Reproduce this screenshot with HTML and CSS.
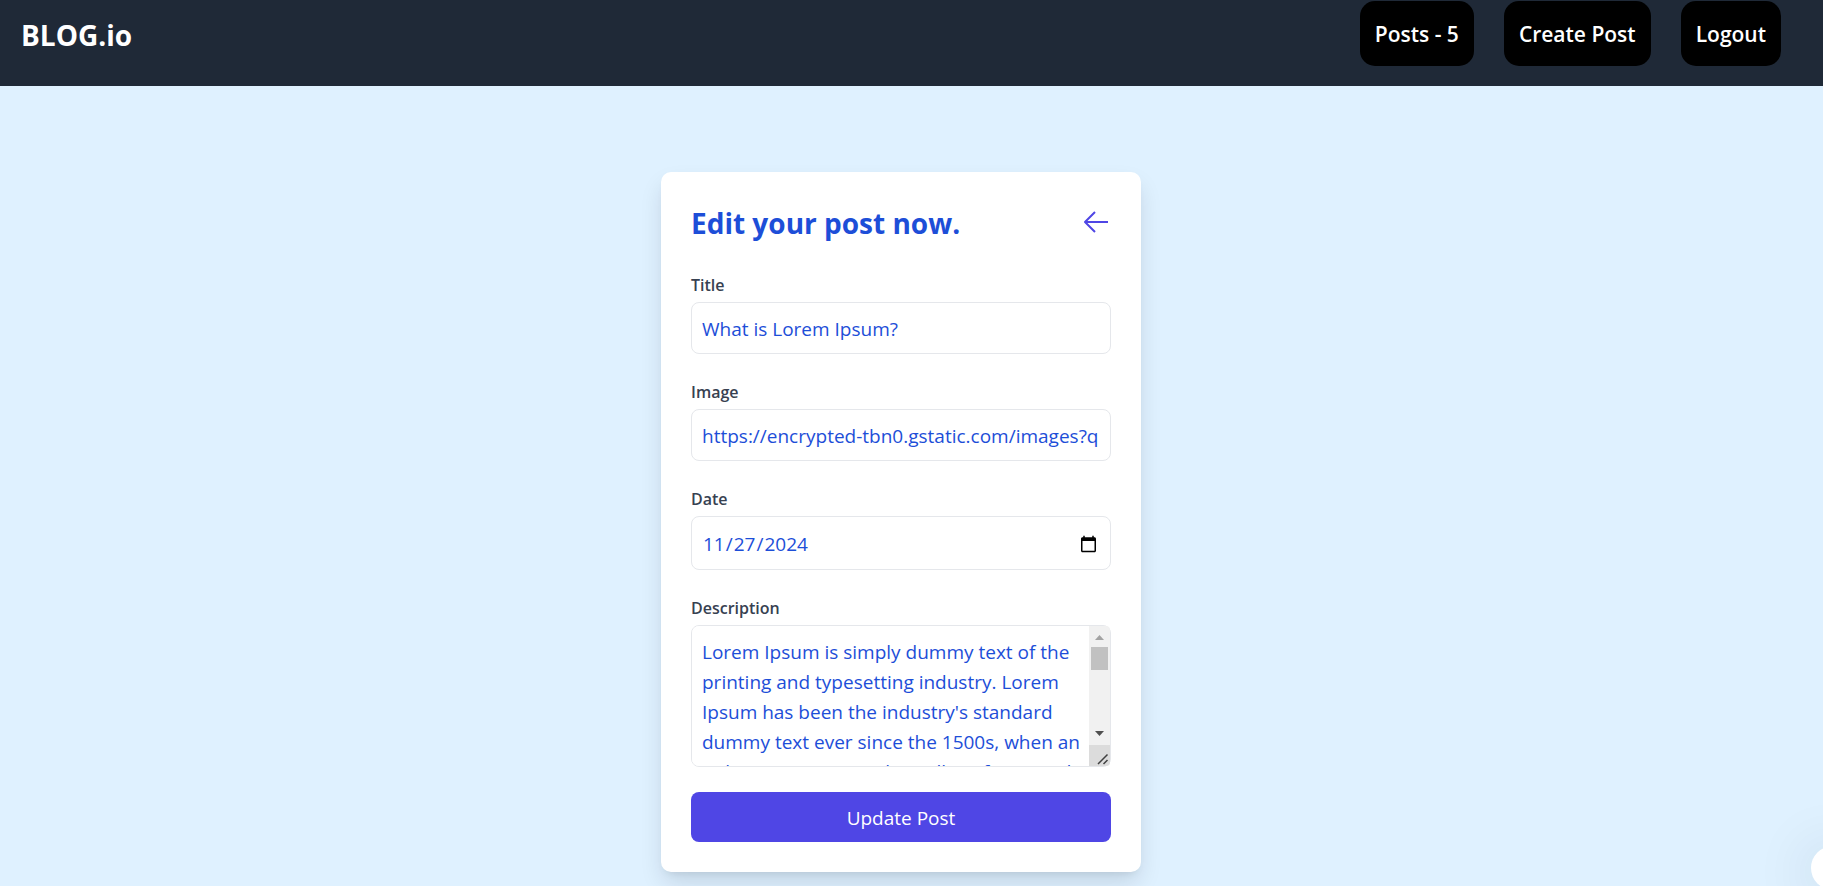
FILE: index.html
```html
<!DOCTYPE html>
<html lang="en-US">
<head>
<meta charset="utf-8">
<meta name="viewport" content="width=device-width, initial-scale=1">
<title>BLOG.io</title>
<link rel="stylesheet" href="styles.css">
</head>
<body>
<header class="navbar">
  <a class="brand" href="#">BLOG.io</a>
  <nav class="nav-links">
    <a class="nav-link" href="#">Posts - 5</a>
    <a class="nav-link" href="#">Create Post</a>
    <button class="nav-link" type="button">Logout</button>
  </nav>
</header>
<main class="page">
  <form class="card">
    <div class="card-head">
      <h1 class="card-title">Edit your post now.</h1>
      <a class="back" href="#" aria-label="Back">
        <svg class="back-icon" viewBox="0 0 30 30" fill="none" stroke="currentColor" stroke-width="2" stroke-linejoin="round"><path d="M27 14H4M14 4 4 14l10 10"/></svg>
      </a>
    </div>
    <div class="field">
      <label class="label" for="title">Title</label>
      <input class="input" id="title" type="text" value="What is Lorem Ipsum?">
    </div>
    <div class="field">
      <label class="label" for="image">Image</label>
      <input class="input" id="image" type="text" value="https://encrypted-tbn0.gstatic.com/images?q">
    </div>
    <div class="field">
      <label class="label" for="date">Date</label>
      <input class="input input-date" id="date" type="date" value="2024-11-27">
    </div>
    <div class="field">
      <label class="label" for="description">Description</label>
      <div class="textarea-wrap">
        <textarea class="input textarea" id="description">Lorem Ipsum is simply dummy text of the printing and typesetting industry. Lorem Ipsum has been the industry's standard dummy text ever since the 1500s, when an unknown printer took a galley of type and scrambled it to make a type specimen book. It has survived not only five centuries, but also the leap into electronic typesetting, remaining essentially unchanged. It was popularised in the 1960s with the release of Letraset sheets containing Lorem Ipsum passages, and more recently with desktop publishing software like Aldus PageMaker including versions of Lorem Ipsum.</textarea>
        <div class="scrollbar" aria-hidden="true">
          <svg class="scroll-arrow scroll-up" viewBox="0 0 21 21"><path d="M6 14 10.500 9 15 14z"/></svg>
          <div class="scroll-track"><div class="scroll-thumb"></div></div>
          <svg class="scroll-arrow scroll-down" viewBox="0 0 21 21"><path d="M6 7h9l-4.500 5z"/></svg>
          <svg class="scroll-corner" viewBox="0 0 21 21"><path d="m9 19 9.500-9.500M14.500 19l4-4"/></svg>
        </div>
      </div>
    </div>
    <button class="submit" type="submit">Update Post</button>
  </form>
</main>
<button class="float-button" type="button" aria-label="Open menu"></button>
</body>
</html>
```
FILE: styles.css
```css
* { box-sizing: border-box; }

body {
  margin: 0;
  min-height: 100vh;
  background: #dff1ff;
  font-family: "Open Sans", "Noto Sans", sans-serif;
  font-size: 19px;
}

.navbar {
  display: flex;
  align-items: flex-start;
  justify-content: space-between;
  height: 86px;
  padding: 1px 42px 0 21px;
  background: #1f2937;
}

.brand {
  padding-top: 14px;
  color: #fff;
  font-size: 28px;
  font-weight: 700;
  line-height: 40px;
  text-decoration: none;
}

.nav-links { display: flex; gap: 30px; }

.nav-link {
  padding: 16px 15px 14px;
  border: 0;
  border-radius: 15px;
  background: #000;
  color: #fff;
  font: 600 21px/35px "Open Sans", "Noto Sans", sans-serif;
  text-decoration: none;
}

.page {
  display: flex;
  justify-content: center;
  padding: 86px 21px 14px 0;
}

.card {
  width: 480px;
  padding: 30px;
  border-radius: 10px;
  background: #fff;
  box-shadow: 0 12px 24px -3px rgb(0 20 40 / 14%), 0 5px 8px -5px rgb(0 0 0 / 10%);
}

.card-head {
  display: flex;
  justify-content: space-between;
  margin-bottom: 28px;
}

.card-title {
  margin: 0;
  color: #1d4ed8;
  font-size: 28px;
  font-weight: 700;
  line-height: 42px;
}

.back { padding-top: 6px; color: #4f46e5; }
.back-icon { display: block; width: 30px; height: 30px; }

.field { margin-bottom: 25px; }

.label {
  display: block;
  margin-bottom: 3px;
  color: #374151;
  font-size: 16px;
  font-weight: 600;
  line-height: 27px;
}

.input {
  display: block;
  width: 100%;
  height: 52px;
  padding: 11px 10px 9px;
  border: 1px solid #e5e7eb;
  border-radius: 8px;
  outline: none;
  background: #fff;
  color: #1d4ed8;
  font: 400 19px/30px "Open Sans", "Noto Sans", sans-serif;
}

.input-date { height: 54px; }

.textarea-wrap { position: relative; }

.textarea {
  height: 142px;
  padding-right: 24px;
  resize: none;
}

/* Scrollbar laid over the right edge of the text area */
.scrollbar {
  position: absolute;
  top: 1px;
  right: 1px;
  bottom: 1px;
  display: flex;
  flex-direction: column;
  width: 21px;
  border-radius: 0 4px 4px 0;
  background: #f1f1f1;
  overflow: hidden;
}

.scroll-arrow, .scroll-corner { display: block; flex: none; width: 21px; height: 21px; }
.scroll-up { fill: #a3a3a3; }
.scroll-down { fill: #505050; }
.scroll-track { flex: 1; padding: 0 2px; }
.scroll-thumb { height: 23px; background: #c1c1c1; }
.scroll-corner { background: #dcdcdc; fill: none; stroke: #404040; stroke-width: 1.5; }

.submit {
  display: block;
  width: 100%;
  height: 50px;
  padding: 11px 10px 9px;
  border: 0;
  border-radius: 8px;
  background: #4f46e5;
  color: #fff;
  font: 400 19px/30px "Open Sans", "Noto Sans", sans-serif;
}

.float-button {
  position: fixed;
  right: -32px;
  bottom: -4px;
  width: 44px;
  height: 44px;
  border: 0;
  border-radius: 50%;
  background: #fff;
  box-shadow: 0 4px 60px rgb(0 40 60 / 16%);
}
```
